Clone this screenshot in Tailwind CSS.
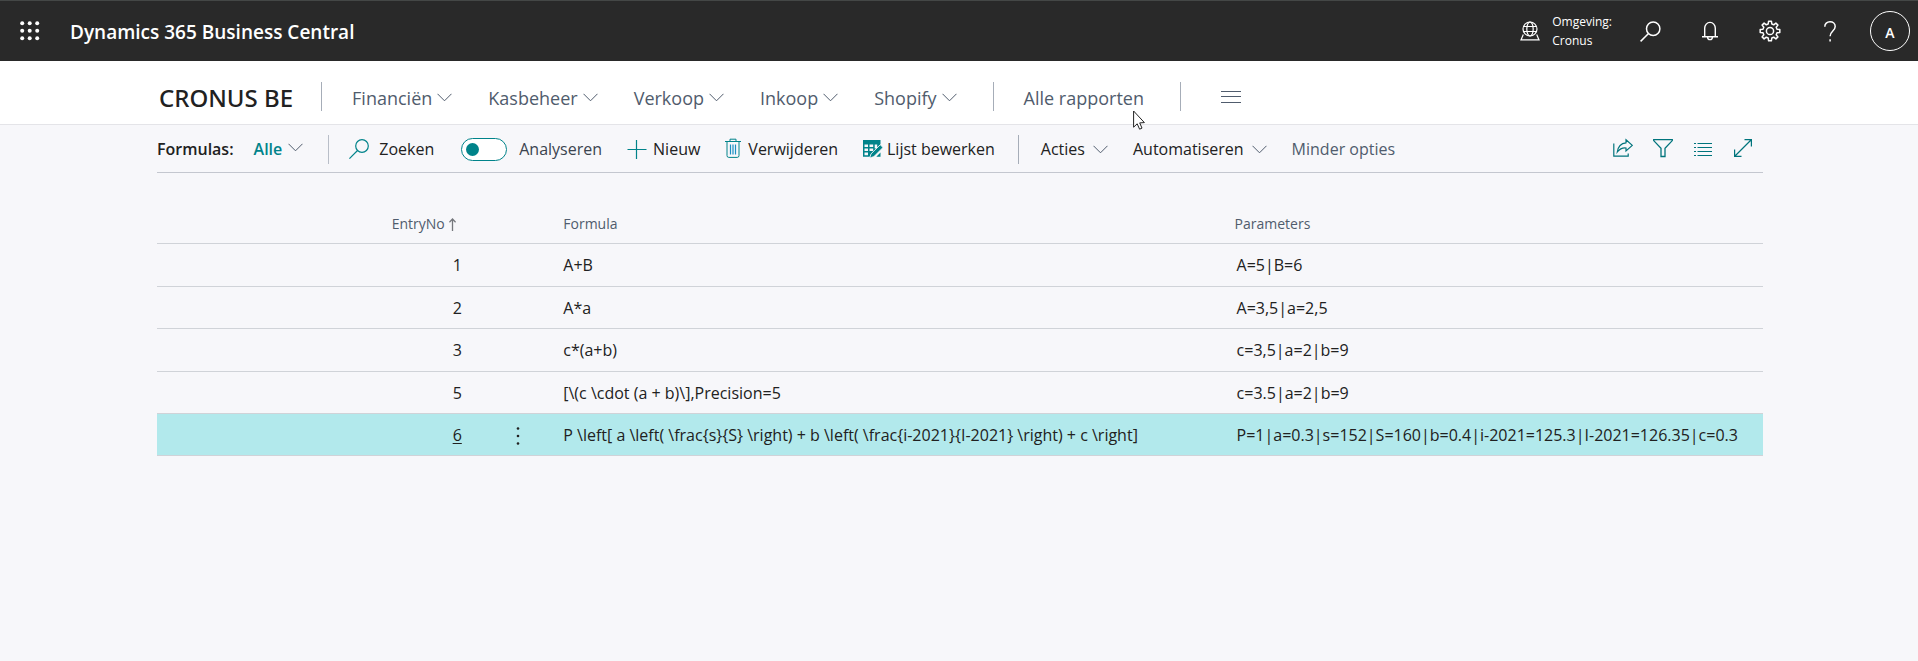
<!DOCTYPE html>
<html lang="nl">
<head>
<meta charset="utf-8">
<title>Formulas - Dynamics 365 Business Central</title>
<script src="https://cdn.jsdelivr.net/npm/@tailwindcss/browser@4"></script>
</head>
<body class="min-h-screen bg-[#f7f7fa] font-['Open_Sans','Noto_Sans',sans-serif] text-base text-[#212121]">

<svg class="hidden">
  <symbol id="chevron" viewBox="0 0 15 9"><path d="M.5 .8 7.5 7.8 14.5 .8" fill="none" stroke="currentColor"/></symbol>
</svg>

<header class="flex h-[61px] items-center border-t border-[#444746] bg-[#292929] text-white">
  <button aria-label="App launcher" class="mr-[30px] ml-5 flex">
    <svg class="size-5" viewBox="0 0 20 20" fill="currentColor"><circle cx="2.2" cy="2.2" r="2"/><circle cx="9.7" cy="2.2" r="2"/><circle cx="17.2" cy="2.2" r="2"/><circle cx="2.2" cy="9.7" r="2"/><circle cx="9.7" cy="9.7" r="2"/><circle cx="17.2" cy="9.7" r="2"/><circle cx="2.2" cy="17.2" r="2"/><circle cx="9.7" cy="17.2" r="2"/><circle cx="17.2" cy="17.2" r="2"/></svg>
  </button>
  <a href="#" class="pt-[2px] text-[19px] font-semibold whitespace-nowrap">Dynamics 365 Business Central</a>
  <div class="ml-auto flex h-full items-center">
    <button class="flex items-center gap-3 pr-2 text-left text-xs leading-[19px]">
      <svg class="size-5" viewBox="0 0 20 20" fill="none" stroke="currentColor" stroke-width="1.2"><circle cx="10" cy="8" r="7"/><ellipse cx="10" cy="8" rx="3.2" ry="7"/><path d="M3.7 5.5H16.3M3.7 10.5H16.3M3.3 13.5 1 18.9H19L16.7 13.5"/></svg>
      <span>Omgeving:<br>Cronus</span>
    </button>
    <button aria-label="Zoeken" class="flex h-full w-[60px] items-center justify-center">
      <svg class="size-[21px]" viewBox="0 0 21 21" fill="none" stroke="currentColor" stroke-width="1.5"><circle cx="13.2" cy="7.8" r="6.7"/><path d="M8.5 12.5.6 20.4"/></svg>
    </button>
    <button aria-label="Meldingen" class="flex h-full w-[60px] items-center justify-center">
      <svg class="h-5 w-4" viewBox="0 0 16 20" fill="none" stroke="currentColor" stroke-width="1.4"><path d="M2.7 15.5V7.2a5.3 5.8 0 0 1 10.6 0v8.3M0 15.8H16M5.6 16.2a2.4 2.4 0 0 0 4.8 0"/></svg>
    </button>
    <button aria-label="Instellingen" class="flex h-full w-[60px] items-center justify-center">
      <svg class="size-[22px]" viewBox="0 0 22 22" fill="none" stroke="currentColor" stroke-width="1.5"><circle cx="11" cy="11" r="3.6"/><path stroke-linejoin="round" d="M9.6 1.2 12.4 1.2 12.8 4.0 14.7 4.8 16.9 3.1 18.9 5.1 17.2 7.3 18.0 9.2 20.8 9.6 20.8 12.4 18.0 12.8 17.2 14.7 18.9 16.9 16.9 18.9 14.7 17.2 12.8 18.0 12.4 20.8 9.6 20.8 9.2 18.0 7.3 17.2 5.1 18.9 3.1 16.9 4.8 14.7 4.0 12.8 1.2 12.4 1.2 9.6 4.0 9.2 4.8 7.3 3.1 5.1 5.1 3.1 7.3 4.8 9.2 4.0Z"/></svg>
    </button>
    <button aria-label="Help" class="flex h-full w-[60px] items-center justify-center">
      <svg class="h-[21px] w-3" viewBox="0 0 12 21" fill="none" stroke="currentColor" stroke-width="1.5"><path d="M.8 5.8C.8 2.6 3 .8 6 .8s5.2 1.9 5.2 4.7c0 4.4-5.1 4.6-5.1 9.7M6.1 18.3V20.4"/></svg>
    </button>
    <button aria-label="Account" class="flex h-full w-[58px] items-center pl-[10px]">
      <span class="flex size-10 items-center justify-center rounded-full border border-white pt-1 text-sm font-semibold">A</span>
    </button>
  </div>
</header>

<nav class="relative flex h-16 items-center gap-9 border-b border-[#e4e4e8] bg-white pt-[10px] pl-[159px] text-lg whitespace-nowrap text-[#505c6d]">
  <div class="flex items-center gap-7">
    <a href="#" class="font-['Noto_Sans'] text-2xl font-medium text-[#212121]">CRONUS BE</a>
    <span class="mb-[2px] h-[29px] w-px bg-[#a6adb8]"></span>
    <button class="ml-[2px] flex items-center gap-[5px]">Financiën<svg class="h-[9px] w-[15px]"><use href="#chevron"/></svg></button>
  </div>
  <button class="flex items-center gap-[5px]">Kasbeheer<svg class="h-[9px] w-[15px]"><use href="#chevron"/></svg></button>
  <button class="flex items-center gap-[5px]">Verkoop<svg class="h-[9px] w-[15px]"><use href="#chevron"/></svg></button>
  <button class="flex items-center gap-[5px]">Inkoop<svg class="h-[9px] w-[15px]"><use href="#chevron"/></svg></button>
  <button class="flex items-center gap-[5px]">Shopify<svg class="h-[9px] w-[15px]"><use href="#chevron"/></svg></button>
  <div class="flex items-center gap-[30px]">
    <span class="mb-[2px] h-[29px] w-px bg-[#a6adb8]"></span>
    <a href="#">Alle rapporten</a>
  </div>
  <div class="flex items-center gap-10">
    <span class="mb-[2px] h-[29px] w-px bg-[#a6adb8]"></span>
    <button aria-label="Meer" class="mb-[2px]">
      <svg class="h-3 w-5" viewBox="0 0 20 12" stroke="currentColor"><path d="M0 .5H20M0 5.5H20M0 11.5H20"/></svg>
    </button>
  </div>
  <svg class="pointer-events-none absolute top-[49px] left-[1133px] z-10 h-5 w-3" viewBox="0 0 12 20"><path d="M.6 1V17.2L4.2 13.8 6.6 19.2 9 18.1 6.7 12.9 11.4 12.6Z" fill="#fff" stroke="#222"/></svg>
</nav>

<main class="pr-[155px] pl-[157px]">
  <div class="flex h-12 items-center gap-[25px] border-b border-[#c4c7cf] pt-px whitespace-nowrap">
    <div class="flex items-center gap-5">
      <h1 class="font-semibold">Formulas:</h1>
      <button class="flex items-center gap-[6px] font-semibold text-[#00838a]">Alle<svg class="mb-1 h-[9px] w-[15px] text-[#505c6d]"><use href="#chevron"/></svg></button>
    </div>
    <div class="flex items-center gap-5">
      <span class="h-[29px] w-px bg-[#b9bec8]"></span>
      <button class="flex items-center gap-[10px]">
        <svg class="size-5 text-[#00838a]" viewBox="0 0 20 20" fill="none" stroke="currentColor" stroke-width="1.2"><circle cx="13" cy="7" r="6.3"/><path d="M8.5 11.5.4 19.6"/></svg>Zoeken
      </button>
    </div>
    <label class="ml-[2px] flex items-center gap-3 text-[#3b444f]">
      <input type="checkbox" role="switch" class="h-[23px] w-[46px] appearance-none rounded-full border border-[#00838a] bg-white p-1 before:block before:size-[13px] before:rounded-full before:bg-[#00838a]">Analyseren
    </label>
    <button class="flex items-center gap-[6px]">
      <svg class="size-5 text-[#00838a]" viewBox="0 0 20 20" stroke="currentColor" stroke-width="1.2"><path d="M.5 10.5H19.5M9.5 1V20"/></svg>Nieuw
    </button>
    <button class="flex items-center gap-[7px]">
      <svg class="mb-[2px] h-5 w-4 text-[#00838a]" viewBox="0 0 16 20" fill="none" stroke="currentColor"><path d="M0 3.5H16M5 3.5V1.2H11V3.5M2 3.5V17.5Q2 19.4 3.8 19.4H12.2Q14 19.4 14 17.5V3.5"/><path stroke="#1a8fc4" stroke-width="1.2" d="M5.5 6.5V16.5M8 6.5V16.5M10.5 6.5V16.5"/></svg>Verwijderen
    </button>
    <button class="flex items-center gap-1">
      <svg class="h-[18px] w-5" viewBox="0 0 20 18"><path fill="#00838a" fill-rule="evenodd" d="M0 0H17.5V4.2L14.7 7H11.7V8.4H13.3L11.7 10V11H10.7L8 13.7 7 16.8H0ZM1.5 4.4V7H5V4.4ZM6.5 4.4V7H10.2V4.4ZM11.7 4.4V7H14.2V4.4ZM1.5 8.4V11H5V8.4ZM6.5 8.4V11H10.2V8.4ZM1.5 12.4V15.3H5V12.4Z"/><path fill="#00838a" stroke="#f7f7fa" stroke-width=".8" d="M17.2 4.8 20 7.5 10.9 16.6 6.6 18 8.1 13.8Z"/><path fill="#00838a" d="M13.5 16.8H17.5V12.5L13.5 16.4Z"/></svg>Lijst bewerken
    </button>
    <div class="flex items-center gap-[22px]">
      <span class="-ml-[2px] h-[29px] w-px bg-[#a6adb8]"></span>
      <button class="flex items-center gap-2">Acties<svg class="h-[9px] w-[15px] text-[#505c6d]"><use href="#chevron"/></svg></button>
    </div>
    <button class="flex items-center gap-2">Automatiseren<svg class="h-[9px] w-[15px] text-[#505c6d]"><use href="#chevron"/></svg></button>
    <button class="text-[#505c6d]">Minder opties</button>
    <div class="mr-[10px] ml-auto flex items-center gap-5 pb-[2px] text-[#00747c]">
      <button aria-label="Delen"><svg class="size-5" viewBox="0 0 20 20" fill="none" stroke="currentColor" stroke-width="1.2"><path d="M.8 5.5V18.2H15.2V15.5M13 1.8 19.3 7.4 13 13V10Q7.8 9.5 4.3 14 5.5 5.3 13 4.8Z"/></svg></button>
      <button aria-label="Filter"><svg class="size-5" viewBox="0 0 20 20" fill="none" stroke="currentColor" stroke-width="1.3"><path d="M.7 1.7H19.3V2.6L12 10.3V18.5H8V10.3L.7 2.6Z"/></svg></button>
      <button aria-label="Lijst"><svg class="size-5" viewBox="0 0 20 20" stroke="currentColor" stroke-width="1.2"><path d="M1 5.5H3M4.5 5.5H19M1 9.5H3M4.5 9.5H19M1 13.5H3M4.5 13.5H19M1 17.5H3M4.5 17.5H19"/></svg></button>
      <button aria-label="Volledig scherm"><svg class="size-5" viewBox="0 0 20 20" fill="none" stroke="currentColor" stroke-width="1.2"><path d="M1.5 18.5 18.5 1.5M11.5 1.6H18.4V8.5M1.6 11.5V18.4H8.5"/></svg></button>
    </div>
  </div>

  <table class="mt-[30px] w-full table-fixed border-separate border-spacing-0 text-left">
    <colgroup><col class="w-[20.1%]"><col class="w-[4.7%]"><col class="w-[41.8%]"><col></colgroup>
    <thead class="text-sm text-[#505c6d]">
      <tr class="h-[41px] *:border-b *:border-[#d0d3d8] *:pt-[2px] *:font-normal">
        <th class="pr-6 text-right"><button class="inline-flex items-center gap-1">EntryNo<svg class="h-[13px] w-[7px] text-[#75777c]" viewBox="0 0 7 13" fill="none" stroke="currentColor" stroke-width="1.3"><path d="M3.5 13V1M.4 4.2 3.5 1 6.6 4.2"/></svg></button></th>
        <th></th>
        <th class="pl-2">Formula</th>
        <th class="pl-2">Parameters</th>
      </tr>
    </thead>
    <tbody class="*:*:border-b *:*:border-[#d0d3d8]">
      <tr class="h-[43px]"><td class="pr-[18px] text-right">1</td><td></td><td class="pl-2">A+B</td><td class="pl-[10px]">A=5|B=6</td></tr>
      <tr class="h-[42px]"><td class="pr-[18px] text-right">2</td><td></td><td class="pl-2">A*a</td><td class="pl-[10px]">A=3,5|a=2,5</td></tr>
      <tr class="h-[43px]"><td class="pr-[18px] text-right">3</td><td></td><td class="pl-2">c*(a+b)</td><td class="pl-[10px]">c=3,5|a=2|b=9</td></tr>
      <tr class="h-[42px]"><td class="pr-[18px] text-right">5</td><td></td><td class="pl-2">[\(c \cdot (a + b)\],Precision=5</td><td class="pl-[10px]">c=3.5|a=2|b=9</td></tr>
      <tr class="h-[42px] bg-[#b2e9ec]"><td class="pr-[18px] text-right"><a href="#" class="underline underline-offset-2">6</a></td><td class="text-center"><button aria-label="Meer opties" class="align-middle"><svg class="h-[18px] w-1" viewBox="0 0 4 18" fill="currentColor"><circle cx="2" cy="1.5" r="1.3"/><circle cx="2" cy="9" r="1.3"/><circle cx="2" cy="16.5" r="1.3"/></svg></button></td><td class="pl-2 whitespace-nowrap">P \left[ a \left( \frac{s}{S} \right) + b \left( \frac{i-2021}{I-2021} \right) + c \right]</td><td class="pl-[10px] whitespace-nowrap">P=1|a=0.3|s=152|S=160|b=0.4|i-2021=125.3|I-2021=126.35|c=0.3</td></tr>
    </tbody>
  </table>
</main>
</body>
</html>
